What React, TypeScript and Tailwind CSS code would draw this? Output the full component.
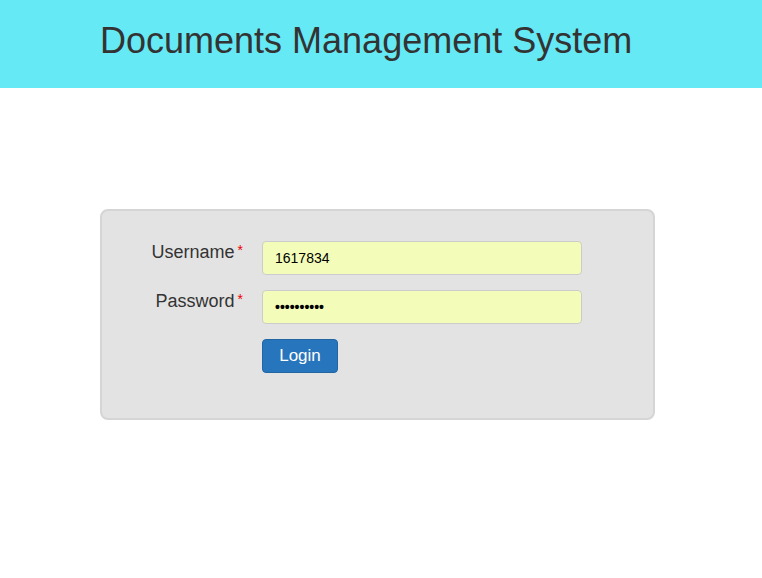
const Field = ({ label, type, value }: { label: string; type: string; value: string }) => (
  <div className="flex items-start">
    <label className="w-[143px] pt-[2px] pr-[2px] text-right text-[18px] leading-none text-[#333]">
      {label}
      <span className="ml-[3px] align-top text-[14px] text-[#e00]">*</span>
    </label>
    <input
      type={type}
      value={value}
      readOnly
      className={
        type === "password"
          ? "ml-[17px] h-[34px] w-[320px] rounded-[4px] border border-[#ccc] bg-[#f3fdb9] px-3 text-[14px] font-bold text-black outline-none"
          : "ml-[17px] h-[34px] w-[320px] rounded-[4px] border border-[#ccc] bg-[#f3fdb9] px-3 text-[14px] text-black outline-none"
      }
    />
  </div>
);

const App = () => {
  return (
    <div className="min-h-[578px] bg-white" style={{ fontFamily: '"Liberation Sans", Arial, sans-serif' }}>
      <header className="flex h-[88px] items-center bg-[#65e9f5] pl-[100px] pb-[6px]">
        <h1 className="text-[36px] font-normal text-[#333]">Documents Management System</h1>
      </header>

      <div className="pt-[121px] pl-[100px]">
        <div className="h-[211px] w-[555px] rounded-[8px] border-2 border-[#d5d5d5] bg-[#e3e3e3] pt-[30px]">
          <div className="flex flex-col gap-[15px]">
            <Field label="Username" type="text" value="1617834" />
            <Field label="Password" type="password" value="1234567890" />
          </div>
          <div className="mt-[15px] pl-[160px]">
            <button className="h-[34px] w-[76px] rounded-[4px] border border-[#2265a3] bg-[#2775bd] text-[17px] text-white">
              Login
            </button>
          </div>
        </div>
      </div>
    </div>
  );
};

export default App;
